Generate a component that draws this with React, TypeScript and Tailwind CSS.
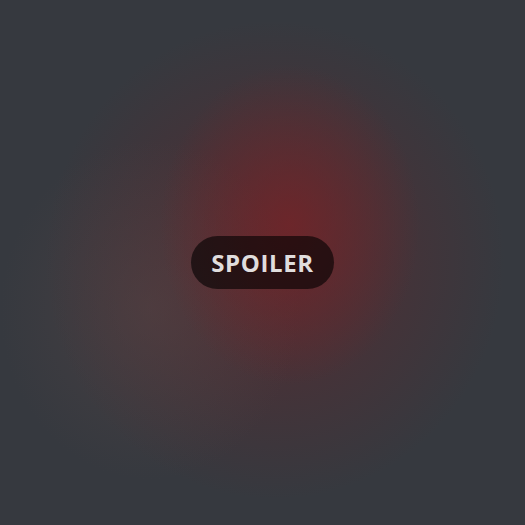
export default function App() {
  return (
    <div
      className="w-[525px] h-[525px] flex items-center justify-center bg-[#36393f] bg-[radial-gradient(ellipse_130px_160px_at_290px_225px,rgba(115,36,40,0.8),transparent),radial-gradient(ellipse_150px_170px_at_150px_310px,rgba(90,70,70,0.45),transparent),radial-gradient(ellipse_230px_240px_at_275px_260px,rgba(95,40,45,0.75),transparent)]"
    >
      <button
        className="h-[53px] px-5 rounded-full bg-black/60 text-[#e0dddd] text-[24px] font-bold tracking-[0.6px] font-['Open_Sans',sans-serif] flex items-center"
      >
        SPOILER
      </button>
    </div>
  );
}
